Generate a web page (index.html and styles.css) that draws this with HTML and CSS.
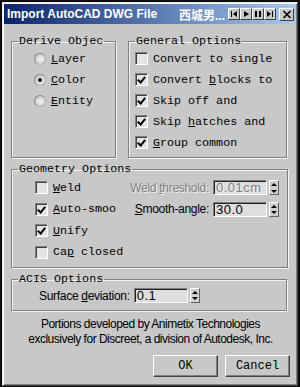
FILE: index.html
```html
<!DOCTYPE html>
<html lang="en">
<head>
    <meta charset="UTF-8">
    <title>Import AutoCAD DWG File</title>
    <link rel="stylesheet" href="styles.css">
</head>
<body>

    <div class="window">
        <!-- Title bar -->
        <div class="titlebar">
            <span class="title">Import AutoCAD DWG File</span>
            <span class="owner">西城男...</span>
            <div class="tb-buttons">
                <span class="tb-btn"><svg width="8" height="8" viewBox="0 0 8 8"><rect x="1" y="1" width="1" height="6"/><path d="M7 1 L3 4 L7 7 Z"/></svg></span>
                <span class="tb-btn"><svg width="8" height="8" viewBox="0 0 8 8"><path d="M2 1 L7 4 L2 7 Z"/></svg></span>
                <span class="tb-btn"><svg width="8" height="8" viewBox="0 0 8 8"><rect x="1" y="1" width="2" height="6"/><rect x="5" y="1" width="2" height="6"/></svg></span>
                <span class="tb-btn"><svg width="8" height="8" viewBox="0 0 8 8"><path d="M1 1 L5 4 L1 7 Z"/><rect x="6" y="1" width="1" height="6"/></svg></span>
                <span class="tb-btn close"><svg width="10" height="9" viewBox="0 0 10 9"><path d="M1.5 1 L8.5 8 M8.5 1 L1.5 8" stroke="#000" stroke-width="1.6"/></svg></span>
            </div>
        </div>

        <div class="client">
            <div class="top-row">
                <!-- Derive -->
                <fieldset class="group derive">
                    <legend>Derive Objec</legend>
                    <div class="group-body">
                        <div class="row"><span class="radio"></span><span><u>L</u>ayer</span></div>
                        <div class="row"><span class="radio on"></span><span><u>C</u>olor</span></div>
                        <div class="row"><span class="radio"></span><span><u>E</u>ntity</span></div>
                    </div>
                </fieldset>

                <!-- General -->
                <fieldset class="group general">
                    <legend>General Options</legend>
                    <div class="group-body">
                        <div class="row"><span class="check"></span><span>Convert to single</span></div>
                        <div class="row"><span class="check on"></span><span>Convert <u>b</u>locks to</span></div>
                        <div class="row"><span class="check on"></span><span>Skip off and</span></div>
                        <div class="row"><span class="check on"></span><span>Skip <u>h</u>atches and</span></div>
                        <div class="row"><span class="check on"></span><span><u>G</u>roup common</span></div>
                    </div>
                </fieldset>
            </div>

            <!-- Geometry -->
            <fieldset class="group geometry">
                <legend>Geometry Options</legend>
                <div class="group-body">
                    <div class="row">
                        <div class="opt"><span class="check"></span><span><u>W</u>eld</span></div>
                        <div class="spin-field">
                            <span class="label disabled">Weld <u>t</u>hreshold:</span>
                            <span class="field disabled">0.01cm</span>
                            <span class="spinner"></span>
                        </div>
                    </div>
                    <div class="row">
                        <div class="opt"><span class="check on"></span><span><u>A</u>uto-smoo</span></div>
                        <div class="spin-field">
                            <span class="label"><u>S</u>mooth-angle:</span>
                            <span class="field">30.0</span>
                            <span class="spinner"></span>
                        </div>
                    </div>
                    <div class="row">
                        <div class="opt"><span class="check on"></span><span><u>U</u>nify</span></div>
                    </div>
                    <div class="row">
                        <div class="opt"><span class="check"></span><span>Ca<u>p</u> closed</span></div>
                    </div>
                </div>
            </fieldset>

            <!-- ACIS -->
            <fieldset class="group acis">
                <legend>ACIS Options</legend>
                <div class="group-body">
                    <div class="spin-field">
                        <span class="label">Surface <u>d</u>eviation:</span>
                        <span class="field">0.1</span>
                        <span class="spinner"></span>
                    </div>
                </div>
            </fieldset>

            <p class="credits">Portions developed by Animetix Technologies<br>exclusively for Discreet, a division of Autodesk, Inc.</p>

            <div class="buttons">
                <span class="button">OK</span>
                <span class="button">Cancel</span>
            </div>
        </div>
    </div>

</body>
</html>
```

FILE: styles.css
```css
body {
    margin: 0;
    background-color: #0c0c0c;
    width: 300px;
    height: 387px;
    overflow: hidden;
}

.window {
    margin: 2px 0 0 2px;
    width: 292px;
    height: 380px;
    background-color: #c8c8c8;
    border: 1px solid;
    border-color: #e8e8e8 #404040 #404040 #e8e8e8;
    box-shadow: inset 1px 1px #ffffff, inset -1px -1px #808080;
    padding: 1px;
    font-family: "Liberation Mono", monospace;
    font-size: 11.7px;
    color: #000;
}

/* Title bar */
.titlebar {
    height: 20px;
    display: flex;
    align-items: center;
    background: linear-gradient(to right, #0a246a, #a6caf0);
    color: white;
    font-family: "Liberation Sans", Arial, sans-serif;
    font-weight: bold;
    font-size: 12px;
    padding-left: 3px;
}

.title {
    flex: 1;
}

.owner {
    font-family: "Liberation Sans", "Noto Sans CJK SC", sans-serif;
    margin-right: 3px;
}

.tb-buttons {
    display: flex;
    align-items: center;
    padding-right: 2px;
}

.tb-btn {
    width: 12px;
    height: 12px;
    display: flex;
    align-items: center;
    justify-content: center;
    background: #c8c8c8;
    border: 1px solid;
    border-color: #fff #404040 #404040 #fff;
    box-sizing: border-box;
}

.tb-btn.close {
    width: 15px;
    height: 13px;
    margin-left: 3px;
}

/* Client area */
.client {
    padding: 11px 6px 0 7px;
}

.top-row {
    display: flex;
    gap: 12px;
}

.group {
    margin: 0;
    padding: 0;
    min-width: 0;
    border: 1px solid #808080;
    box-shadow: inset 1px 1px #f4f4f4, 1px 1px #f4f4f4;
    box-sizing: border-box;
}

.group legend {
    margin-left: 6px;
    padding: 0 1px;
    line-height: 13px;
    white-space: nowrap;
}

.row {
    display: flex;
    align-items: center;
    height: 21px;
    gap: 5px;
}

.derive {
    width: 105px;
    height: 123px;
}

.derive .group-body {
    padding-left: 22px;
}

.general {
    width: 159px;
    height: 123px;
}

.general .group-body {
    padding-left: 6px;
}

/* radio buttons */
.radio {
    width: 12px;
    height: 12px;
    box-sizing: border-box;
    border-radius: 50%;
    background: radial-gradient(circle at 55% 55%, #f0f0f0 0%, #dcdcdc 50%, #a0a0a0 100%);
    border: 1px solid #b0b0b0;
    border-top-color: #8c8c8c;
    border-left-color: #8c8c8c;
    display: flex;
    align-items: center;
    justify-content: center;
}

.radio.on::after {
    content: "";
    width: 4px;
    height: 4px;
    border-radius: 50%;
    background: #000;
}

/* checkboxes */
.check {
    width: 13px;
    height: 13px;
    box-sizing: border-box;
    background: #e4e4e4;
    border: 1px solid;
    border-color: #808080 #ffffff #ffffff #808080;
    box-shadow: inset 1px 1px #404040;
    position: relative;
}

.check.on::after {
    content: "";
    position: absolute;
    left: 3px;
    top: 1px;
    width: 3px;
    height: 6px;
    border: solid #000;
    border-width: 0 2px 2px 0;
    transform: rotate(40deg);
}

/* Geometry */
.geometry {
    margin-top: 5px;
    width: 277px;
    height: 105px;
}

.geometry .group-body {
    padding: 1px 8px 0 23px;
}

.geometry .row {
    justify-content: space-between;
    height: 21.5px;
}

.opt {
    display: flex;
    align-items: center;
    gap: 5px;
}

.spin-field {
    display: flex;
    align-items: center;
}

.label {
    font-family: "Liberation Sans", Arial, sans-serif;
    font-size: 12px;
    margin-right: 4px;
    letter-spacing: -0.3px;
}

.disabled {
    color: #808080;
    text-shadow: 1px 1px #f0f0f0;
}

.field {
    width: 54px;
    height: 15px;
    box-sizing: border-box;
    background: #dedede;
    border: 1px solid;
    border-color: #808080 #ffffff #ffffff #808080;
    box-shadow: inset 1px 1px #202020;
    font-family: "Liberation Sans", Arial, sans-serif;
    font-size: 13px;
    line-height: 13px;
    padding-left: 2px;
    letter-spacing: 0.5px;
}

.spinner {
    width: 10px;
    height: 15px;
    margin-left: 2px;
    box-sizing: border-box;
    background: #d0d0d0;
    border: 1px solid;
    border-color: #fff #606060 #606060 #fff;
    display: flex;
    flex-direction: column;
    align-items: center;
    justify-content: space-around;
}

.spinner::before {
    content: "";
    border: 3px solid transparent;
    border-bottom: 3px solid #000;
    border-top: 0;
}

.spinner::after {
    content: "";
    border: 3px solid transparent;
    border-top: 3px solid #000;
    border-bottom: 0;
}

/* ACIS */
.acis {
    margin-top: 5px;
    width: 276px;
    height: 38px;
}

.acis .group-body {
    padding: 2px 0 0 27px;
}

/* Credits and buttons */
.credits {
    margin: 6px 0 0 0;
    text-align: center;
    font-family: "Liberation Sans", Arial, sans-serif;
    font-size: 12px;
    line-height: 15px;
    letter-spacing: -0.5px;
}

.buttons {
    display: flex;
    justify-content: flex-end;
    gap: 7px;
    margin-top: 8px;
}

.button {
    width: 65px;
    height: 22px;
    box-sizing: border-box;
    border: 1px solid;
    border-color: #ffffff #404040 #404040 #ffffff;
    box-shadow: inset -1px -1px #808080;
    display: flex;
    align-items: center;
    justify-content: center;
    font-size: 12px;
}
```
